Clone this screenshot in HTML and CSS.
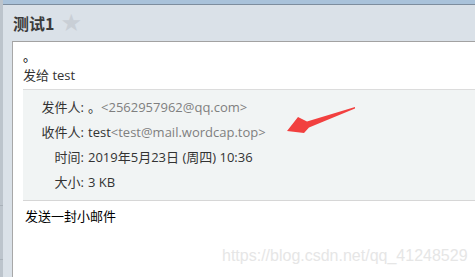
FILE: index.html
```html
<!DOCTYPE html>
<html lang="zh-CN">
<head>
    <meta charset="UTF-8">
    <meta name="viewport" content="width=device-width, initial-scale=1.0">
    <title>测试1</title>
    <link rel="stylesheet" href="styles.css">
</head>
<body>
    <div class="page">
        <div class="rail">
            <span class="rail-line first"></span>
            <span class="rail-line second"></span>
        </div>
        <div class="main">
            <div class="topbar"></div>
            <div class="title-row">
                <h1 class="title">测试1</h1>
                <span class="star">★</span>
            </div>
            <div class="panel">
                <div class="subject">。</div>
                <div class="to-line">发给 test</div>
                <div class="meta">
                    <div class="label">发件人:</div>
                    <div class="value">。<span class="addr">&lt;2562957962@qq.com&gt;</span></div>
                    <div class="label">收件人:</div>
                    <div class="value">test<span class="addr">&lt;test@mail.wordcap.top&gt;</span></div>
                    <div class="label">时间:</div>
                    <div class="value">2019年5月23日 (周四) 10:36</div>
                    <div class="label">大小:</div>
                    <div class="value">3 KB</div>
                </div>
                <div class="content">发送一封小邮件</div>
            </div>
        </div>
    </div>
    <svg class="arrow" width="475" height="277" viewBox="0 0 475 277">
        <polygon points="355,107 307,121.5 298,117 287,131 304,133 309,127.5 355,108.5" fill="#f2403f"/>
    </svg>
    <div class="watermark">https://blog.csdn.net/qq_41248529</div>
</body>
</html>
```

FILE: styles.css
```css
body {
    margin: 0;
    width: 475px;
    height: 277px;
    overflow: hidden;
    background-color: #dae1e8;
    font-family: "Open Sans", "Noto Sans CJK SC", sans-serif;
    font-size: 13px;
    color: #333;
    position: relative;
}
.page {
    display: flex;
    height: 277px;
}
.rail {
    width: 3px;
    background-color: #bcc4cc;
    position: relative;
}
.rail-line {
    position: absolute;
    left: 0;
    width: 3px;
    height: 1px;
    background-color: #a9b1b9;
}
.rail-line.first {
    top: 205px;
}
.rail-line.second {
    top: 259px;
}
.main {
    flex: 1;
    display: flex;
    flex-direction: column;
}
.topbar {
    height: 4px;
    background-color: #a9c2da;
    border-bottom: 1px solid #7d8d9e;
}
.title-row {
    height: 36px;
    display: flex;
    align-items: center;
    gap: 6px;
    padding-left: 10px;
}
.title {
    margin: 0;
    font-family: "Noto Sans CJK SC", sans-serif;
    font-size: 16px;
    font-weight: bold;
    color: #3b3b3b;
    line-height: 20px;
}
.star {
    color: #c9cfd6;
    font-size: 24px;
    line-height: 20px;
    font-family: "DejaVu Sans", sans-serif;
}
.panel {
    flex: 1;
    margin-left: 9px;
    background-color: #fff;
    border-top: 1px solid #a2a2a2;
    border-left: 1px solid #a8a8a8;
    padding-left: 10px;
}
.subject {
    padding-top: 5px;
    line-height: 18px;
    color: #000;
}
.to-line {
    padding-top: 1px;
    line-height: 18px;
}
.meta {
    margin-top: 5px;
    display: grid;
    grid-template-columns: 61px 1fr;
    column-gap: 4px;
    padding: 5px 0;
    background-color: #f1f4f4;
    border-top: 1px solid #dcdcdc;
    border-bottom: 1px solid #d6d6d6;
    line-height: 25px;
}
.label {
    text-align: right;
}
.addr {
    color: #7f7f7f;
}
.content {
    margin-top: 6px;
    padding-left: 2px;
    line-height: 18px;
    color: #000;
}
.arrow {
    position: absolute;
    left: 0;
    top: 0;
}
.watermark {
    position: absolute;
    left: 222px;
    top: 246px;
    font-family: "Liberation Sans", sans-serif;
    font-size: 16px;
    line-height: 20px;
    color: #e6e6e6;
}
```
